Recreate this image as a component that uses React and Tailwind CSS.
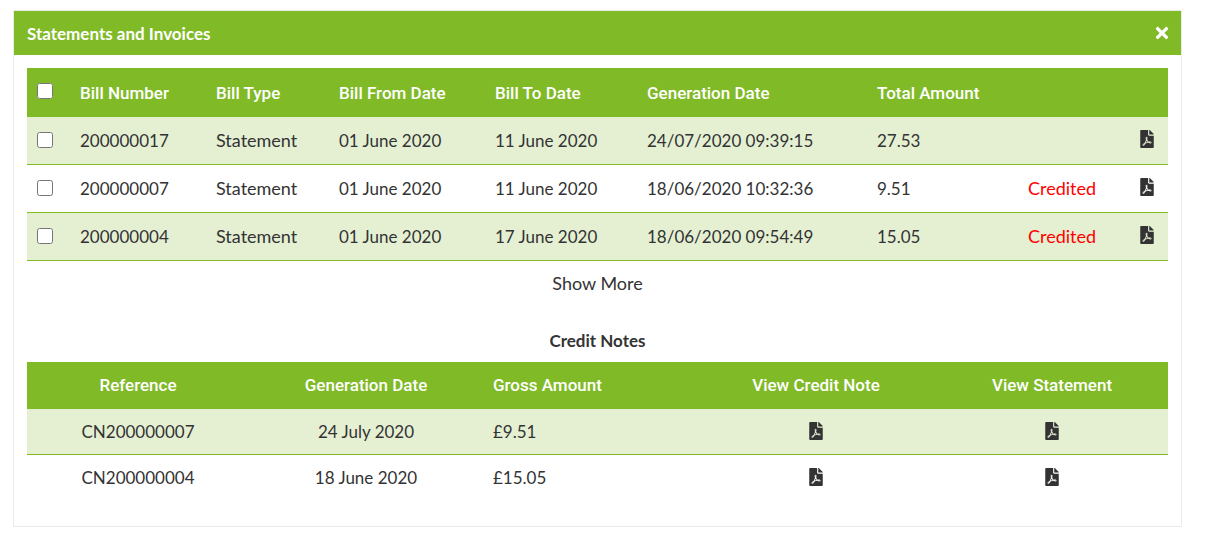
import { FaFilePdf, FaTimes } from 'react-icons/fa';

const bills = [
  { number: '200000017', type: 'Statement', from: '01 June 2020', to: '11 June 2020', generated: '24/07/2020 09:39:15', total: '27.53', status: '' },
  { number: '200000007', type: 'Statement', from: '01 June 2020', to: '11 June 2020', generated: '18/06/2020 10:32:36', total: '9.51', status: 'Credited' },
  { number: '200000004', type: 'Statement', from: '01 June 2020', to: '17 June 2020', generated: '18/06/2020 09:54:49', total: '15.05', status: 'Credited' },
];

const creditNotes = [
  { reference: 'CN200000007', generated: '24 July 2020', gross: '£9.51' },
  { reference: 'CN200000004', generated: '18 June 2020', gross: '£15.05' },
];

const headCell = 'pt-0.5 pl-2 font-medium';
const figureCell = 'border-b border-[#80ba27] pl-2 leading-6';
const wordCell = 'border-b border-[#80ba27] pb-0.5 pl-2 text-lg leading-6';
const noteCell = 'border-b border-[#80ba27] leading-6 group-last:border-transparent';

function PdfButton({ label }) {
  return (
    <button type="button" aria-label={label} className="block cursor-pointer">
      <FaFilePdf size={18} />
    </button>
  );
}

function BillsTable() {
  return (
    <table className="w-full table-fixed border-separate border-spacing-0 text-left text-[17px]">
      <colgroup>
        <col className="w-[45px]" />
        <col className="w-[136px]" />
        <col className="w-[123px]" />
        <col className="w-[156px]" />
        <col className="w-[152px]" />
        <col className="w-[230px]" />
        <col className="w-[151px]" />
        <col className="w-[112px]" />
        <col className="w-[36px]" />
      </colgroup>
      <thead className="bg-[#80ba27] font-['Roboto',sans-serif] text-white">
        <tr className="h-[49px]">
          <th className="pb-1 pl-2.5">
            <input type="checkbox" aria-label="Select all bills" className="block size-4" />
          </th>
          <th className={headCell}>Bill Number</th>
          <th className={headCell}>Bill Type</th>
          <th className={headCell}>Bill From Date</th>
          <th className={headCell}>Bill To Date</th>
          <th className={headCell}>Generation Date</th>
          <th className={headCell}>Total Amount</th>
          <th></th>
          <th></th>
        </tr>
      </thead>
      <tbody>
        {bills.map((bill) => (
          <tr key={bill.number} className="h-12 odd:bg-[#e5f0d3]">
            <td className="border-b border-[#80ba27] pb-0.5 pl-2.5">
              <input type="checkbox" aria-label={`Select bill ${bill.number}`} className="block size-4" />
            </td>
            <td className={figureCell}>{bill.number}</td>
            <td className={wordCell}>{bill.type}</td>
            <td className={figureCell}>{bill.from}</td>
            <td className={figureCell}>{bill.to}</td>
            <td className={figureCell}>{bill.generated}</td>
            <td className={figureCell}>{bill.total}</td>
            <td className={`${wordCell} text-[#ff0000]`}>{bill.status}</td>
            <td className="border-b border-[#80ba27] pb-1 pl-1.5">
              <PdfButton label={`Open bill ${bill.number}`} />
            </td>
          </tr>
        ))}
      </tbody>
    </table>
  );
}

function CreditNotesTable() {
  return (
    <table className="w-full table-fixed border-separate border-spacing-0 text-center text-[17px]">
      <colgroup>
        <col className="w-[222px]" />
        <col className="w-[234px]" />
        <col className="w-[213px]" />
        <col className="w-[240px]" />
        <col className="w-[232px]" />
      </colgroup>
      <thead className="bg-[#80ba27] font-['Roboto',sans-serif] text-white">
        <tr className="h-[47px]">
          <th className="font-medium">Reference</th>
          <th className="font-medium">Generation Date</th>
          <th className="pl-2.5 text-left font-medium">Gross Amount</th>
          <th className="font-medium">View Credit Note</th>
          <th className="font-medium">View Statement</th>
        </tr>
      </thead>
      <tbody>
        {creditNotes.map((note) => (
          <tr key={note.reference} className="group h-[46px] odd:bg-[#e5f0d3]">
            <td className={noteCell}>{note.reference}</td>
            <td className={noteCell}>{note.generated}</td>
            <td className={`${noteCell} pl-2.5 text-left`}>{note.gross}</td>
            <td className={`${noteCell} pb-0.5`}>
              <div className="flex justify-center">
                <PdfButton label={`View credit note ${note.reference}`} />
              </div>
            </td>
            <td className={`${noteCell} pb-0.5`}>
              <div className="flex justify-center">
                <PdfButton label={`View statement for ${note.reference}`} />
              </div>
            </td>
          </tr>
        ))}
      </tbody>
    </table>
  );
}

export default function App() {
  return (
    <div className="pt-2.5 pr-6 pb-5 pl-[13px] font-['Lato',sans-serif] text-lg text-[#333333]">
      <section className="border border-[#ebebeb]">
        <header className="flex h-11 items-center justify-between bg-[#80ba27] pr-2.5 pl-[13px] text-white">
          <h1 className="pt-0.5 text-[17px] font-bold">Statements and Invoices</h1>
          <button type="button" aria-label="Close" className="cursor-pointer">
            <FaTimes size={18} />
          </button>
        </header>
        <div className="px-[13px] pt-[13px] pb-[25px]">
          <BillsTable />
          <div className="flex h-[46px] items-center justify-center pb-0.5">
            <button type="button" className="cursor-pointer">Show More</button>
          </div>
          <h2 className="flex h-[55px] items-end justify-center pb-2 text-[17px] font-bold">Credit Notes</h2>
          <CreditNotesTable />
        </div>
      </section>
    </div>
  );
}
